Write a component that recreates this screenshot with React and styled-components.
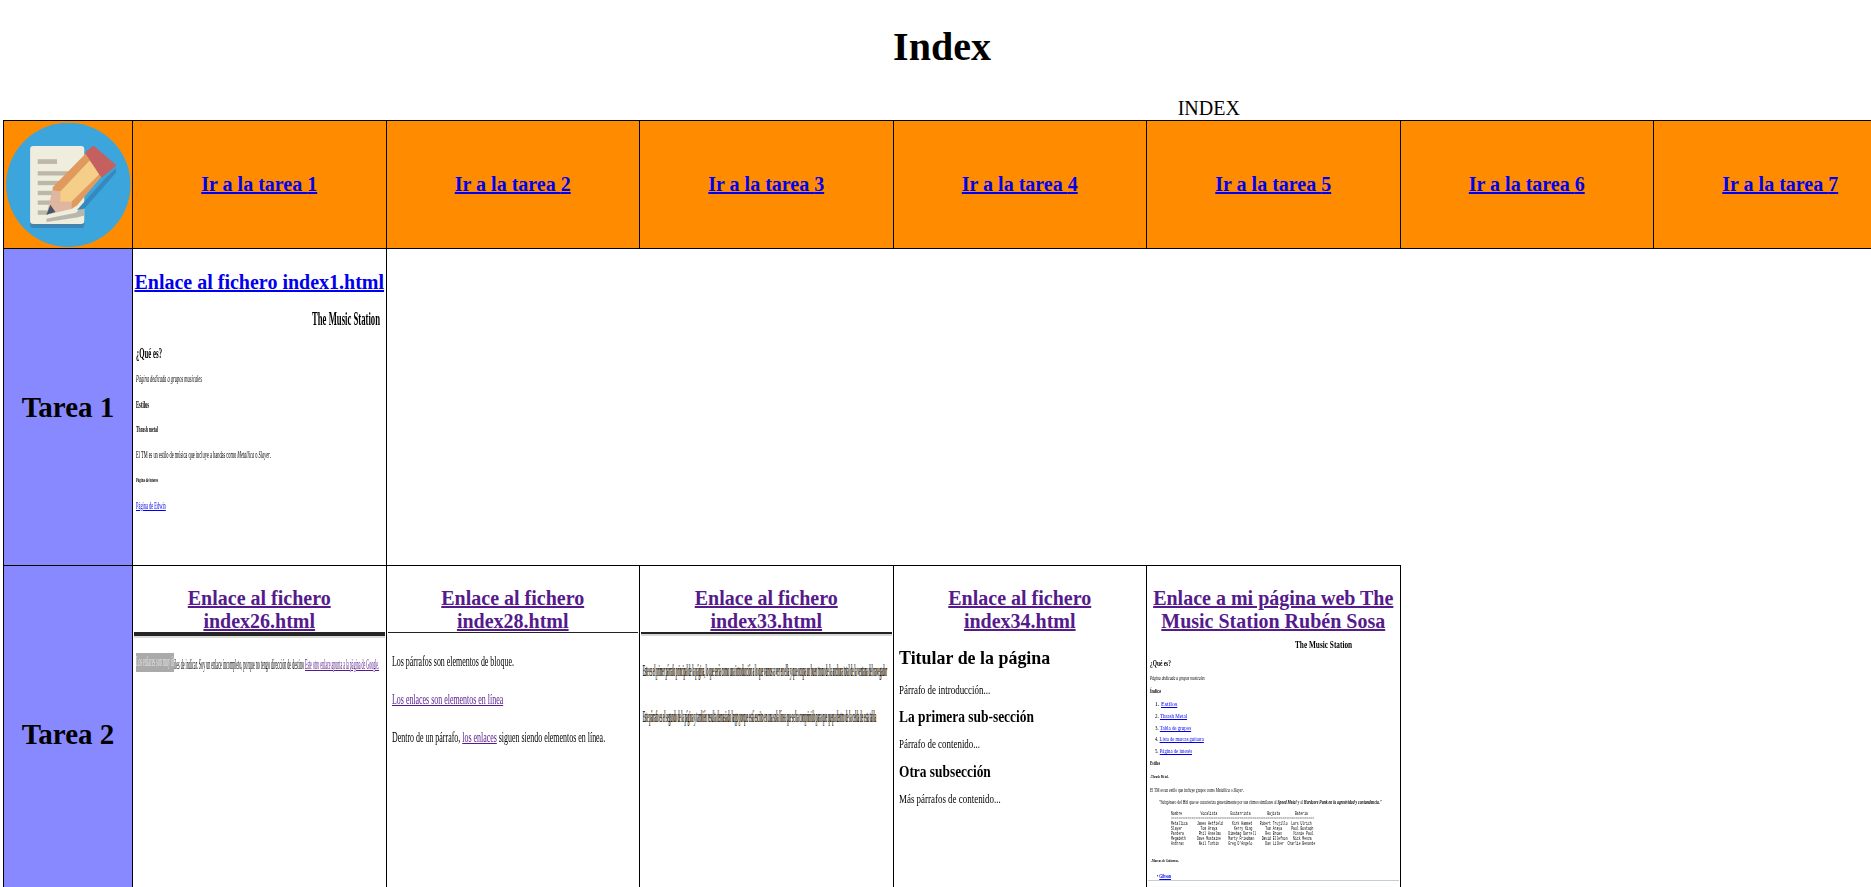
import React, { useLayoutEffect, useRef } from "react";
import styled, { createGlobalStyle } from "styled-components";

const GlobalStyle = createGlobalStyle`
  html, body { overflow: hidden; height: 100%; }
  body {
    margin: 0 0 0 3px;
    background: #fff;
    color: #000;
    font-family: "Liberation Serif", "Times New Roman", serif;
    font-size: 20px;
  }
`;

const Title = styled.h1`
  margin: 0;
  padding: 24px 0 0 10px;
  height: 97px;
  box-sizing: border-box;
  width: 1868px;
  text-align: center;
  font-size: 40px;
  line-height: 46px;
`;

const Grid = styled.table`
  border-collapse: collapse;
  table-layout: fixed;
  width: 2411px;
`;

const Caption = styled.caption`
  font-size: 20px;
  line-height: 23px;
  text-align: center;
`;

const Cell = styled.td`
  border: 1px solid #000;
  padding: 1px;
  height: ${(p) => p.$h}px;
  background: ${(p) => p.$bg || "#fff"};
  text-align: center;
  vertical-align: ${(p) => (p.$top ? "top" : "middle")};
  overflow: hidden;
`;

const NavLink = styled.a`
  color: #0000ee;
  font-weight: bold;
  font-size: 20px;
`;

const TaskName = styled.span`
  font-size: 29px;
  font-weight: bold;
`;

const Heading = styled.div`
  margin: 21px 0 0;
  font-size: 20px;
  font-weight: bold;
  line-height: 23px;
  white-space: nowrap;
`;

const WrapHeading = styled(Heading)`
  margin: 20px 0 -1px;
  white-space: normal;
  padding: 0 5px;
`;

const HeadingLink = styled.a`
  color: ${(p) => (p.$visited ? "#551a8b" : "#0000ee")};
`;

const Shot = styled.div`
  text-align: left;
  filter: ${(p) => (p.$blur ? `blur(${p.$blur}px)` : "none")};
`;

const Row = styled.div`
  display: flex;
  align-items: center;
  padding-top: ${(p) => p.$dy}px;
  padding-left: ${(p) => p.$x || 0}px;
`;

const Slot = styled.div`
  flex: none;
  width: ${(p) => p.$w}px;
  height: 0;
  line-height: 0;
`;

const GreySlot = styled(Slot)`
  height: 19px;
  display: flex;
  align-items: center;
  background: #aaa;
`;

const Squeezed = styled.span`
  display: inline-block;
  white-space: pre;
  transform-origin: left center;
  font-size: ${(p) => p.$size}px;
  font-weight: ${(p) => (p.$bold ? "bold" : "normal")};
  font-style: ${(p) => (p.$italic ? "italic" : "normal")};
  font-family: ${(p) => (p.$mono ? '"Liberation Mono", monospace' : "inherit")};
  color: ${(p) => p.$color || "#000"};
  text-shadow: ${(p) => (p.$fringe ? "3px 0 #f39a2c, -3px 0 #2c8cf3" : "none")};
`;

const Rule = styled.div`
  height: ${(p) => p.$h}px;
  background: ${(p) => p.$color};
  border-bottom: ${(p) => (p.$under ? `2px solid ${p.$under}` : "none")};
  margin-top: ${(p) => p.$mt || 0}px;
`;

const InnerLink = styled.a`
  color: ${(p) => (p.$visited ? "#551a8b" : "#0000ee")};
`;

// stretches the text horizontally to the width it has in the thumbnail
function Fit({ w, size, bold, italic, mono, color, fringe, children }) {
  const ref = useRef(null);
  useLayoutEffect(() => {
    const el = ref.current;
    el.style.transform = `scaleX(${w / el.offsetWidth})`;
  }, [w]);
  return (
    <Squeezed ref={ref} $size={size} $bold={bold} $italic={italic} $mono={mono} $color={color} $fringe={fringe}>
      {children}
    </Squeezed>
  );
}

function Line({ dy, x, w, children, ...rest }) {
  return (
    <Row $dy={dy} $x={x}>
      <Slot $w={w}>
        <Fit w={w} {...rest}>
          {children}
        </Fit>
      </Slot>
    </Row>
  );
}

const LogoIcon = () => (
  <svg width="125" height="124" viewBox="15 22 375 373" style={{ display: "block", margin: "0 auto" }}>
    <circle cx="202" cy="208" r="187" fill="#3ba5dc" />
    <rect x="87" y="103" width="163" height="235" rx="10" fill="#3f86b4" />
    <rect x="87" y="91" width="163" height="235" rx="10" fill="#efeddd" />
    <rect x="110" y="131" width="58" height="14" fill="#bdb7a8" />
    <rect x="110" y="167" width="100" height="13" fill="#bdb7a8" />
    <rect x="110" y="196" width="90" height="13" fill="#bdb7a8" />
    <rect x="110" y="226" width="60" height="13" fill="#bdb7a8" />
    <rect x="110" y="255" width="40" height="13" fill="#bdb7a8" />
    <rect x="110" y="285" width="30" height="13" fill="#bdb7a8" />
    <polygon points="136,310 225,292 250,265 250,300 228,306 137,320" fill="#b9b6ac" />
    <polygon points="228,284 312,190 345,158 345,172 250,280" fill="#3788bd" />
    <polygon points="136,298 155,222 178,228 178,258 212,258 215,280" fill="#dfb7a0" />
    <polygon points="136,298 148,268 163,290" fill="#44546f" />
    <polygon points="155,215 255,113 305,180 228,270 212,280 212,258 178,258 178,228 155,224" fill="#e09a5e" />
    <polygon points="178,228 266,135 300,172 212,258 178,258" fill="#f5cf8a" />
    <polygon
      points="258,112 277,96 340,150 303,180"
      fill="#c56060"
      stroke="#c56060"
      strokeWidth="10"
      strokeLinejoin="round"
    />
  </svg>
);

const monoRow = (cells) => cells.reduce((s, [col, text]) => s.padEnd(col) + text, "");

const bands = [
  [[0, "Nombre"], [16, "Vocalista"], [32, "Guitarrista"], [52, "Bajista"], [67, "Bateria"]],
  null,
  [[0, "Metallica"], [14, "James Hetfield"], [33, "Kirk Hammet"], [48, "Robert Trujillo"], [65, "Lars Ulrich"]],
  [[0, "Slayer"], [16, "Tom Araya"], [34, "Kerry King"], [51, "Tom Araya"], [65, "Paul Bostaph"]],
  [[0, "Pantera"], [15, "Phil Anselmo"], [31, "Dimebag Darrell"], [51, "Rex Brown"], [66, "Vinnie Paul"]],
  [[0, "Megadeth"], [14, "Dave Mustaine"], [31, "Marty Friedman"], [49, "David Ellefson"], [66, "Nick Menza"]],
  [[0, "Anthrax"], [15, "Neil Turbin"], [31, "Greg D'Angelo"], [51, "Dan Lilker"], [63, "Charlie Benante"]],
];

const MusicShot = () => (
  <Shot $blur={0.45}>
    <Line dy={24} x={178} w={68} size={18} bold>The Music Station</Line>
    <Line dy={33} x={2} w={26} size={14} bold>¿Qué es?</Line>
    <Line dy={24} x={2} w={66} size={10} italic>Página dedicada a grupos musicales</Line>
    <Line dy={26} x={2} w={13} size={10} bold>Estilos</Line>
    <Line dy={24} x={2} w={22} size={9} bold>Thrash metal</Line>
    <Line dy={26} x={2} w={135} size={11}>El TM es un estilo de música que incluye a bandas como <i>Metallica</i> o <i>Slayer</i>.</Line>
    <Line dy={24} x={2} w={22} size={7} bold>Página de interes</Line>
    <Line dy={27} x={2} w={30} size={11}>
      <InnerLink href="#">Página de Edwin</InnerLink>
    </Line>
  </Shot>
);

const LinksShot = () => (
  <Shot $blur={0.3}>
    <Rule $h={4} $color="#262626" $under="#dcdcdc" />
    <Row $dy={14.5} $x={2}>
      <GreySlot $w={38}>
        <Fit w={38} size={14} color="#e4e4e4">Los enlaces son muy út</Fit>
      </GreySlot>
      <Slot $w={131}>
        <Fit w={130} size={14}>iles de indicar. Soy un enlace incompleto, porque no tengo dirección de destino</Fit>
      </Slot>
      <Slot $w={74}>
        <Fit w={74} size={14}>
          <InnerLink href="#" $visited>Este otro enlace apunta a la página de Google.</InnerLink>
        </Fit>
      </Slot>
    </Row>
  </Shot>
);

const BlocksShot = () => (
  <Shot $blur={0.25}>
    <Rule $h={1} $color="#222" />
    <Line dy={26} x={4} w={122} size={15}>Los párrafos son elementos de bloque.</Line>
    <Line dy={38} x={4} w={111} size={15}>
      <InnerLink href="#" $visited>Los enlaces son elementos en línea</InnerLink>
    </Line>
    <Line dy={38} x={4} w={213} size={15}>
      Dentro de un párrafo, <InnerLink href="#" $visited>los enlaces</InnerLink> siguen siendo elementos en línea.
    </Line>
  </Shot>
);

const CrushedShot = () => (
  <Shot>
    <Rule $h={2} $color="#222" $under="#d8d8d8" />
    <Line dy={32.5} x={2} w={244} size={16} fringe>
      Este es el primer párrafo principal de la página, lo que sería como una introducción a lo que vamos a ver en ella y que ocupa un buen trozo de la anchura total de la ventana del navegador
    </Line>
    <Line dy={46} x={2} w={233} size={16} fringe>
      Este párrafo es el segundo de la página y también resulta demasiado largo porque está escrito en una sola línea que se ha comprimido para que quepa dentro de la celda de esta tabla
    </Line>
  </Shot>
);

const OutlineShot = () => (
  <Shot $blur={0.2}>
    <Line dy={24.5} x={4} w={151} size={19} bold>Titular de la página</Line>
    <Line dy={30} x={4} w={91} size={12}>Párrafo de introducción...</Line>
    <Line dy={28} x={4} w={135} size={16} bold>La primera sub-sección</Line>
    <Line dy={26} x={4} w={81} size={12}>Párrafo de contenido...</Line>
    <Line dy={29} x={4} w={92} size={16} bold>Otra subsección</Line>
    <Line dy={26} x={4} w={102} size={12}>Más párrafos de contenido...</Line>
  </Shot>
);

const SiteShot = () => (
  <Shot $blur={0.4}>
    <Line dy={9} x={147} w={57} size={11} bold>The Music Station</Line>
    <Line dy={18} x={2} w={21} size={8} bold>¿Qué es?</Line>
    <Line dy={14} x={2} w={55} size={6} italic>Página dedicada a grupos musicales</Line>
    <Line dy={13} x={2} w={11} size={6} bold>Índice</Line>
    <Line dy={13} x={7} w={22} size={6}>1. <InnerLink href="#">Estilos</InnerLink></Line>
    <Line dy={12} x={7} w={32} size={6}>2. <InnerLink href="#">Thrash Metal</InnerLink></Line>
    <Line dy={12} x={7} w={36} size={6}>3. <InnerLink href="#">Tabla de grupos</InnerLink></Line>
    <Line dy={11} x={7} w={49} size={6}>4. <InnerLink href="#">Lista de marcas guitarra</InnerLink></Line>
    <Line dy={12} x={7} w={37} size={6}>5. <InnerLink href="#">Página de interés</InnerLink></Line>
    <Line dy={12} x={2} w={10} size={6} bold>Estilos</Line>
    <Line dy={13} x={2} w={19} size={5} bold>-Thrash Metal-</Line>
    <Line dy={14} x={2} w={94} size={6}>El TM es un estilo que incluye grupos como <i>Metallica</i> o <i>Slayer</i>.</Line>
    <Line dy={12} x={11} w={223} size={6}>
      "Subgénero del Hhl que se caracteriza generalmente por sus ritmos similares al <b><i>Speed Metal</i></b> y al <b><i>Hardcore Punk en la agresividad y contundencia."</i></b>
    </Line>
    {bands.map((cells, i) =>
      cells ? (
        <Line key={i} dy={i === 0 ? 11 : i === 2 ? 5 : 5.1} x={23} w={monoRow(cells).length * 1.85} size={5} mono>
          {monoRow(cells)}
        </Line>
      ) : (
        <Line key={i} dy={5} x={23} w={143} size={5} mono color="#888">
          {"=".repeat(77)}
        </Line>
      )
    )}
    <Line dy={17} x={3} w={28} size={5} bold>-Marcas de Guitarras-</Line>
    <Line dy={16} x={9} w={14} size={6}>• <InnerLink href="#"><b>Gibson</b></InnerLink></Line>
    <Rule $h={1} $color="#c4ccd4" $mt={9} />
  </Shot>
);

const thumbs = [
  { file: "Enlace al fichero index26.html", shot: <LinksShot /> },
  { file: "Enlace al fichero index28.html", shot: <BlocksShot /> },
  { file: "Enlace al fichero index33.html", shot: <CrushedShot /> },
  { file: "Enlace al fichero index34.html", shot: <OutlineShot /> },
  { file: "Enlace a mi página web The Music Station Rubén Sosa", shot: <SiteShot /> },
];

const tasks = [1, 2, 3, 4, 5, 6, 7, 8, 9];

const App = () => (
  <>
    <GlobalStyle />
    <Title>Index</Title>
    <Grid>
      <Caption>INDEX</Caption>
      <colgroup>
        <col style={{ width: 129 }} />
        {tasks.map((n) => (
          <col key={n} style={{ width: 253.5 }} />
        ))}
      </colgroup>
      <tbody>
        <tr>
          <Cell $h={125} $bg="#ff8c00">
            <LogoIcon />
          </Cell>
          {tasks.map((n) => (
            <Cell key={n} $h={125} $bg="#ff8c00">
              <NavLink href="#">Ir a la tarea {n}</NavLink>
            </Cell>
          ))}
        </tr>
        <tr>
          <Cell $h={314} $bg="#8888ff">
            <TaskName>Tarea 1</TaskName>
          </Cell>
          <Cell $h={314} $top>
            <Heading>
              <HeadingLink href="#">Enlace al fichero index1.html</HeadingLink>
            </Heading>
            <MusicShot />
          </Cell>
        </tr>
        <tr>
          <Cell $h={334} $bg="#8888ff">
            <TaskName>Tarea 2</TaskName>
          </Cell>
          {thumbs.map((t) => (
            <Cell key={t.file} $h={334} $top>
              <WrapHeading>
                <HeadingLink href="#" $visited>{t.file}</HeadingLink>
              </WrapHeading>
              {t.shot}
            </Cell>
          ))}
        </tr>
      </tbody>
    </Grid>
  </>
);

export default App;
